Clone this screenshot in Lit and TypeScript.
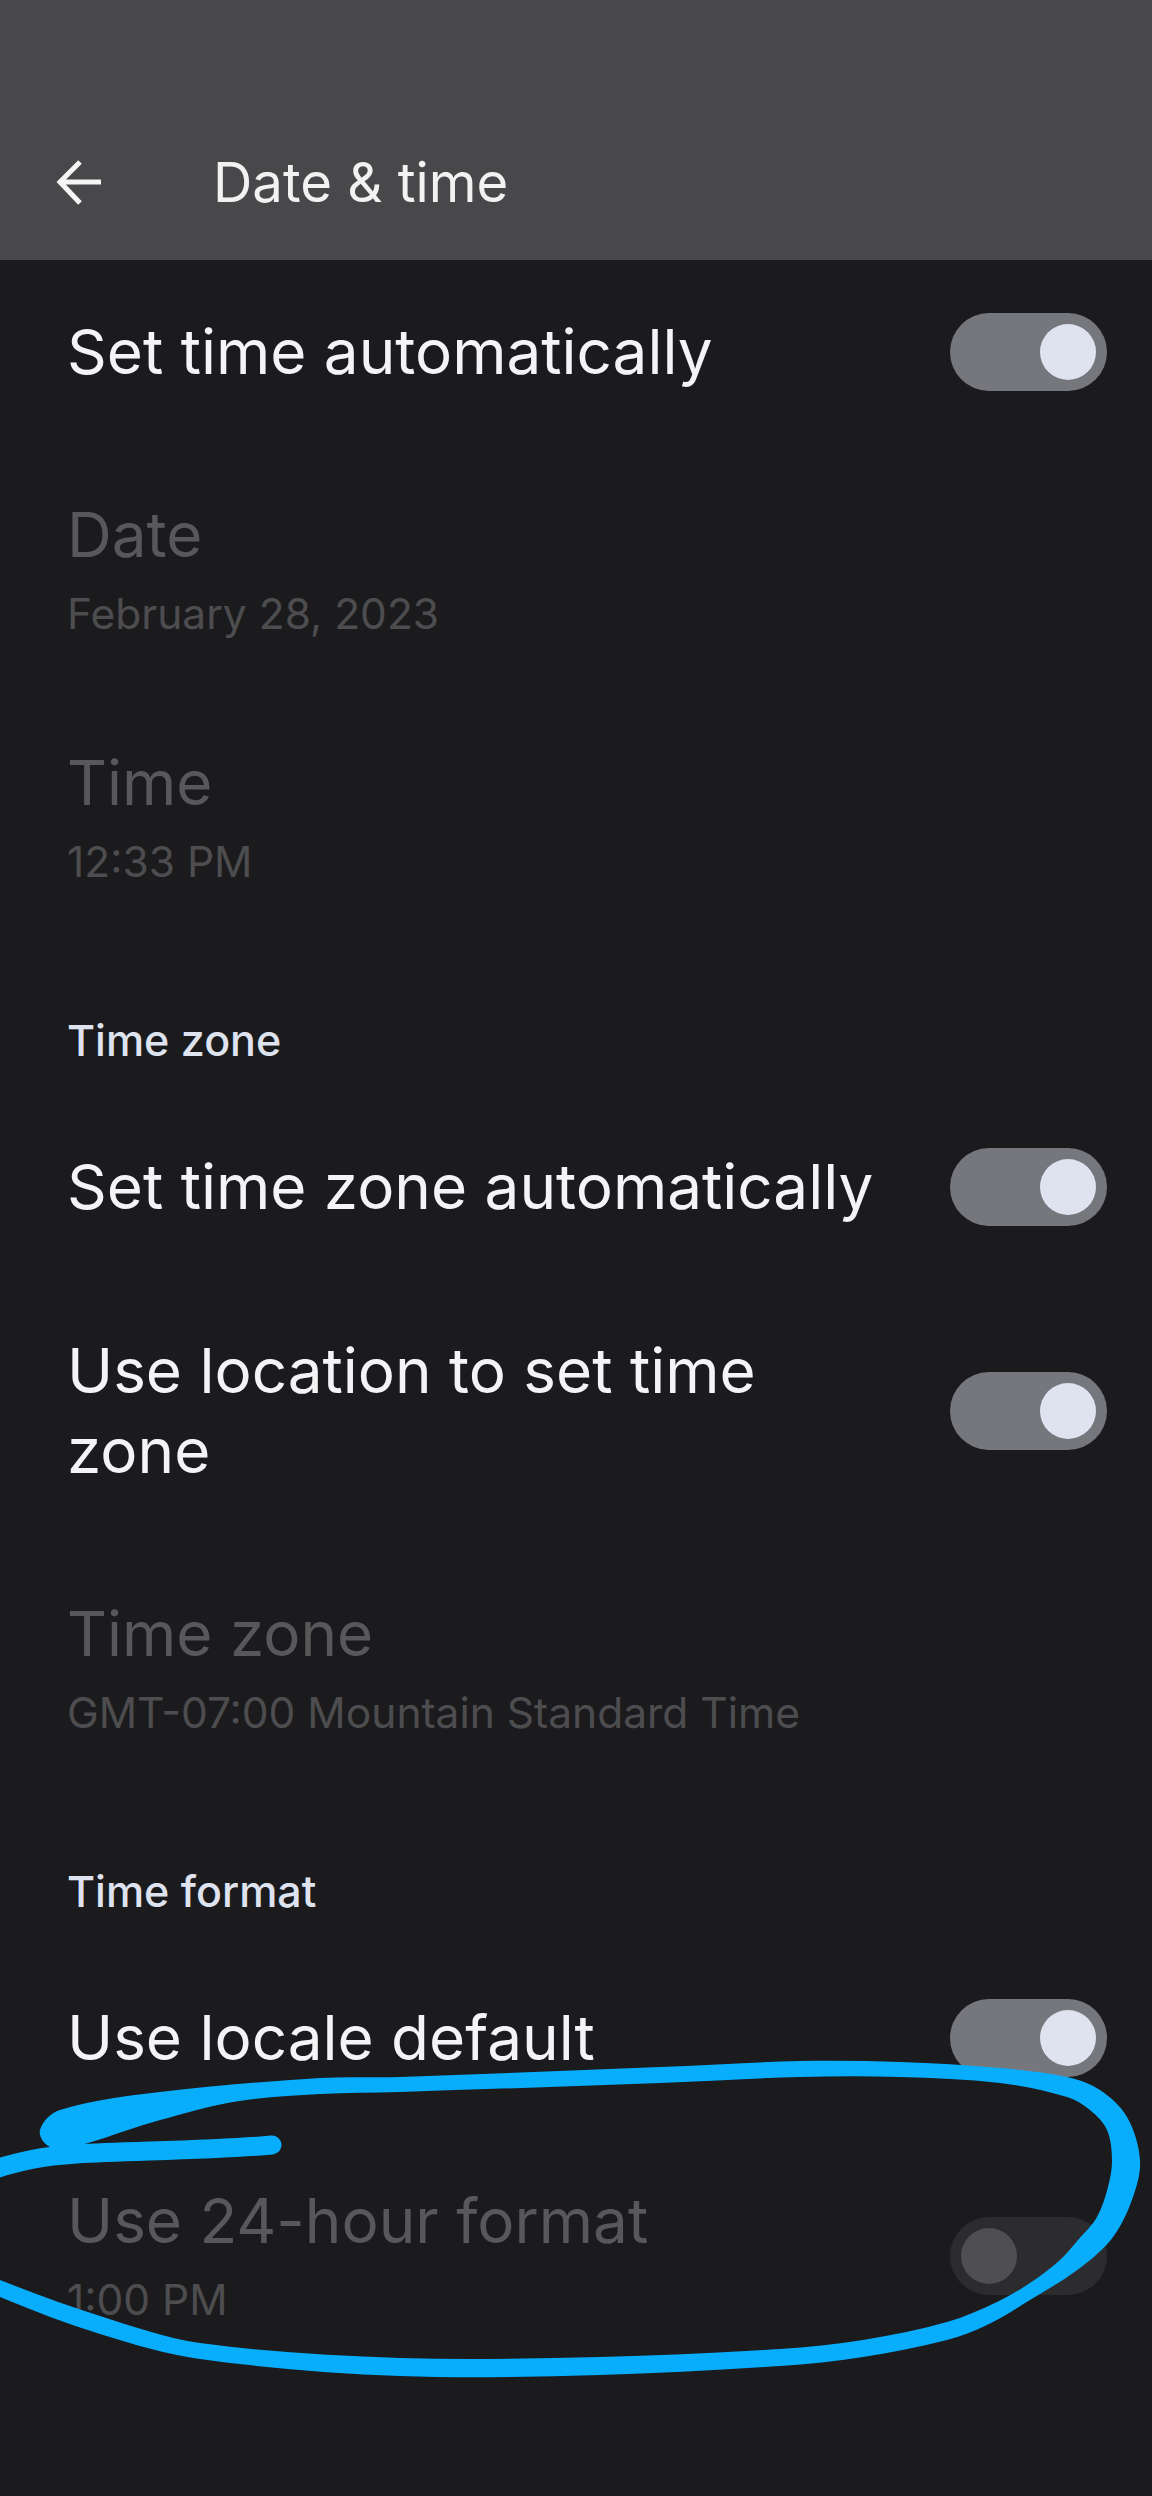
import { LitElement, html, css, svg } from "lit";
import { customElement } from "lit/decorators.js";

type P = [number, number];

/** Smooth closed outline through the given points; handles scale with segment length. */
function smooth(pts: P[]): string {
  const n = pts.length;
  const tan = (i: number): P => {
    const a = pts[(i - 1 + n) % n], b = pts[(i + 1) % n];
    const dx = b[0] - a[0], dy = b[1] - a[1];
    const l = Math.hypot(dx, dy) || 1;
    return [dx / l, dy / l];
  };
  let d = `M${pts[0][0]},${pts[0][1]}`;
  for (let i = 0; i < n; i++) {
    const p1 = pts[i], p2 = pts[(i + 1) % n];
    const len = Math.hypot(p2[0] - p1[0], p2[1] - p1[1]) / 3;
    const t1 = tan(i), t2 = tan(i + 1);
    d += `C${(p1[0] + t1[0] * len).toFixed(1)},${(p1[1] + t1[1] * len).toFixed(1)} ${(p2[0] - t2[0] * len).toFixed(1)},${(p2[1] - t2[1] * len).toFixed(1)} ${p2[0]},${p2[1]}`;
  }
  return d + "Z";
}

const LOOP: P[] = [
  [40, 2130], [60, 2110], [160, 2092], [320, 2078], [400, 2077], [660, 2067], [800, 2061], [900, 2062], [1000, 2068],
  [1067, 2077], [1100, 2090], [1127, 2117], [1140, 2160], [1133, 2197], [1113, 2237], [1080, 2268], [1030, 2300],
  [987, 2325], [947, 2340], [863, 2357], [780, 2366], [600, 2375], [400, 2376], [200, 2359], [100, 2334], [0, 2297], [-30, 2280],
  [-30, 2265], [0, 2280], [100, 2316], [200, 2343], [400, 2358], [600, 2357], [780, 2349], [863, 2340], [947, 2322],
  [997, 2302], [1030, 2283], [1060, 2260], [1078, 2240], [1097, 2217], [1108, 2187], [1112, 2160], [1107, 2130],
  [1090, 2110], [1067, 2097], [1000, 2083], [900, 2077],
  [800, 2077], [660, 2083], [400, 2092], [320, 2094], [233, 2102], [150, 2123], [77, 2146], [50, 2147],
];

@customElement("app-root")
export class AppRoot extends LitElement {
  static styles = css`
    :host { display: block; width: 1152px; height: 2496px; background: #1b1b1d; font-family: Inter, Roboto, sans-serif; position: relative; overflow: hidden; }
    .bar { height: 260px; box-sizing: border-box; background: #48484a; display: flex; align-items: center; padding: 104px 0 0 55px; }
    .bar svg { width: 50px; height: 50px; display: block; flex: none; }
    .bar h1 { margin: 0 0 0 108px; font-size: 54.5px; font-weight: 400; color: #f2f2f3; }
    .row { display: flex; align-items: center; justify-content: space-between; padding: 0 45px 0 67px; height: 184px; }
    .t { font-size: 62px; line-height: 80px; color: #f4f4f6; }
    .d .t { color: #58585a; }
    .s { font-size: 42.5px; line-height: 54px; color: #4d4d50; margin-top: 12px; }
    .d { height: 248px; }
    .loc { height: 264px; }
    .loc .t { max-width: 780px; }
    .h { padding: 50px 67px 5px; font-size: 43px; font-weight: 500; color: #dfe3f0; line-height: 100px; }
    .sw { width: 157px; height: 78px; border-radius: 39px; background: #76777c; display: flex; align-items: center; justify-content: flex-end; padding: 0 11px; box-sizing: border-box; flex: none; }
    .k { width: 56px; height: 56px; border-radius: 50%; background: #dfe3f0; }
    .sw.off { background: #2c2c2e; justify-content: flex-start; margin-top: 3px; }
    .sw.off .k { background: #4f4f51; }
    .ink { position: absolute; inset: 0; width: 1152px; height: 2496px; pointer-events: none; }
  `;
  sw(off = false) { return html`<div class="sw ${off ? "off" : ""}"><div class="k"></div></div>`; }
  render() {
    return html`
      <div class="bar">
        <svg viewBox="0 0 50 50" fill="none" stroke="#f5f5f5" stroke-width="5"><path d="M46 25H5M25 5L5 25l20 21"/></svg>
        <h1>Date &amp; time</h1>
      </div>
      <div class="row"><div class="t">Set time automatically</div>${this.sw()}</div>
      <div class="row d"><div><div class="t">Date</div><div class="s">February 28, 2023</div></div></div>
      <div class="row d"><div><div class="t">Time</div><div class="s">12:33 PM</div></div></div>
      <div class="h">Time zone</div>
      <div class="row"><div class="t">Set time zone automatically</div>${this.sw()}</div>
      <div class="row loc"><div class="t">Use location to set time zone</div>${this.sw()}</div>
      <div class="row d"><div><div class="t">Time zone</div><div class="s">GMT-07:00 Mountain Standard Time</div></div></div>
      <div class="h">Time format</div>
      <div class="row"><div class="t">Use locale default</div>${this.sw()}</div>
      <div class="row d"><div><div class="t">Use 24-hour format</div><div class="s">1:00 PM</div></div>${this.sw(true)}</div>
      <svg class="ink" viewBox="0 0 1152 2496">
        ${svg`<path d=${smooth(LOOP)} fill="#08aefc"/>
        <path d="M272 2145C220 2150 130 2151 77 2154C45 2156 20 2160 -20 2174" fill="none" stroke="#08aefc" stroke-width="19" stroke-linecap="round"/>`}
      </svg>
    `;
  }
}
